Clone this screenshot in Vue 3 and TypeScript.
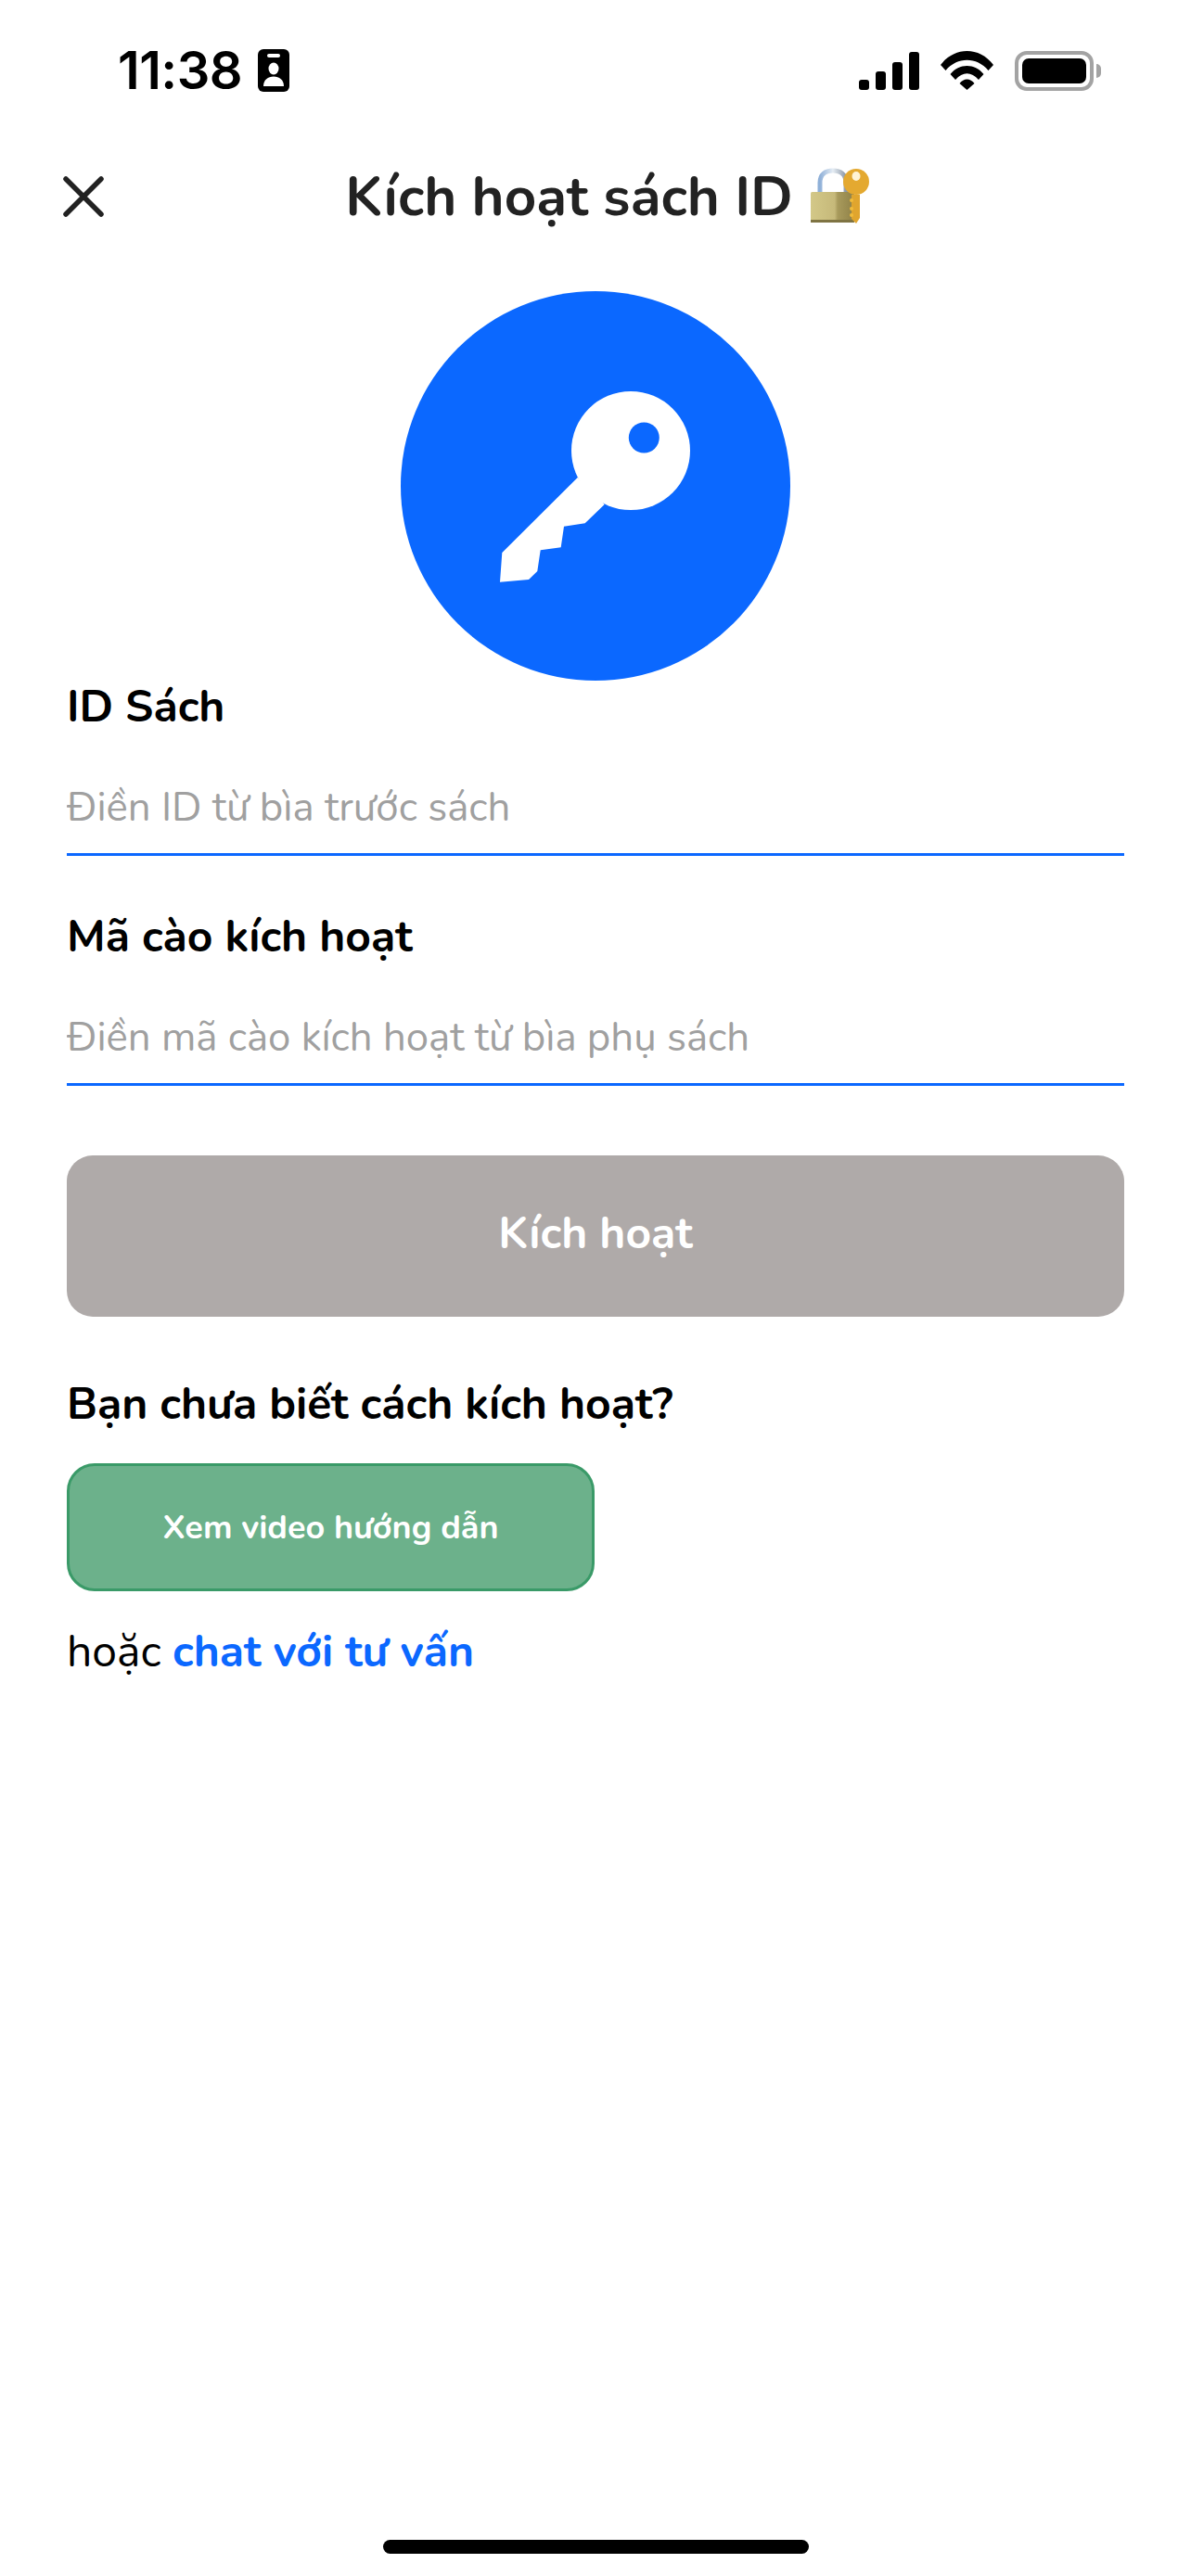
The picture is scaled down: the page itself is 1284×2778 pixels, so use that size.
<script setup lang="ts">
const fields = [
  { label: 'ID Sách', placeholder: 'Điền ID từ bìa trước sách' },
  { label: 'Mã cào kích hoạt', placeholder: 'Điền mã cào kích hoạt từ bìa phụ sách' },
]
</script>

<template>
  <div class="screen">
    <div class="status">
      <div class="status-left">
        <span class="time">11:38</span>
        <svg class="id-icon" width="34" height="46" viewBox="0 0 34 46">
          <rect width="34" height="46" rx="6" fill="#000" />
          <rect x="10" y="5" width="14" height="4" rx="2" fill="#fff" />
          <ellipse cx="17" cy="21" rx="5.500" ry="6.500" fill="#fff" />
          <path d="M6 40c0-7 5-10.500 11-10.500s11 3.500 11 10.500z" fill="#fff" />
        </svg>
      </div>
      <div class="status-right">
        <svg width="65" height="41" viewBox="0 0 65 41">
          <rect x="0" y="30" width="11" height="11" rx="3" />
          <rect x="18" y="21" width="11" height="20" rx="3" />
          <rect x="36" y="11" width="11" height="30" rx="3" />
          <rect x="54" y="0" width="11" height="41" rx="3" />
        </svg>
        <svg width="57" height="42" viewBox="0 0 57 42">
          <path d="M0 15C15-5 42-5 57 15l-5.500 6C39 6 18 6 5.500 21z" />
          <path d="M10.500 25C20 13 37 13 46.500 25l-5.500 6C33 22 24 22 16 31z" />
          <path d="M20.500 35C25 29 32 29 36.500 35L28.500 42z" />
        </svg>
        <div class="battery">
          <div class="battery-body"><div class="battery-fill"></div></div>
          <div class="battery-nub"></div>
        </div>
      </div>
    </div>

    <header class="header">
      <svg class="close" width="46" height="46" viewBox="0 0 46 46">
        <path d="M4 4 42 42M42 4 4 42" stroke="#222" stroke-width="5.500" stroke-linecap="round" fill="none" />
      </svg>
      <h1 class="title">Kích hoạt sách ID</h1>
      <svg class="emoji" width="64" height="62" viewBox="0 0 64 62">
        <defs>
          <linearGradient id="brass" x1="0" x2="1" y1="0" y2="0">
            <stop offset="0" stop-color="#d3c888" />
            <stop offset="0.55" stop-color="#c6b97a" />
            <stop offset="0.62" stop-color="#a89a5c" />
            <stop offset="1" stop-color="#8f8147" />
          </linearGradient>
          <linearGradient id="steel" x1="0" x2="1" y1="0" y2="0">
            <stop offset="0" stop-color="#8fb0d8" />
            <stop offset="0.5" stop-color="#e6edf4" />
            <stop offset="1" stop-color="#8a96a6" />
          </linearGradient>
        </defs>
        <path d="M10 28V16C10 7 16 3 24 3s14 4 14 13v10" fill="none" stroke="url(#steel)" stroke-width="5" />
        <rect x="0" y="26" width="47" height="33" rx="1.500" fill="url(#brass)" />
        <rect x="0" y="56" width="47" height="3" fill="#7f7443" />
        <path d="M44 29h9v25l-4 6-5-5z" fill="#e0a52e" />
        <circle cx="49" cy="15" r="14" fill="#e4a930" />
        <ellipse cx="49" cy="9" rx="4.500" ry="5" fill="#fff4d6" />
        <circle cx="44" cy="35" r="2" fill="#f0bb3a" />
        <circle cx="44" cy="44" r="2" fill="#f0bb3a" />
        <circle cx="44" cy="51" r="2" fill="#f0bb3a" />
      </svg>
    </header>

    <div class="hero">
      <svg width="420" height="420" viewBox="432 314 420 420">
        <circle cx="642" cy="524" r="210" fill="#0b68ff" />
        <circle cx="680" cy="486" r="64" fill="#fff" />
        <polygon
          points="622.700,515 541.300,596 539,627.700 570,625 579.300,616 582.700,593.300 604.700,590.300 608,567.700 630.700,564.300 651.700,544"
          fill="#fff"
        />
        <circle cx="694.300" cy="472" r="16.500" fill="#0b68ff" />
      </svg>
    </div>

    <form class="form" @submit.prevent>
      <label v-for="field in fields" :key="field.label" class="field">
        <span class="field-label">{{ field.label }}</span>
        <input class="field-input" type="text" :placeholder="field.placeholder" />
      </label>

      <button class="submit" type="button">Kích hoạt</button>
    </form>

    <section class="help">
      <h2 class="help-title">Bạn chưa biết cách kích hoạt?</h2>
      <button class="video" type="button">Xem video hướng dẫn</button>
      <p class="chat">hoặc <a class="chat-link">chat với tư vấn</a></p>
    </section>

    <div class="home-indicator"></div>
  </div>
</template>

<style scoped>
.screen {
  position: relative;
  box-sizing: border-box;
  width: 1284px;
  height: 2778px;
  background: #fff;
  font-family: "Nunito", "Open Sans", "Noto Sans", sans-serif;
  color: #000;
  overflow: hidden;
}
.status {
  display: flex;
  justify-content: space-between;
  align-items: center;
  height: 46px;
  padding: 53px 97px 0 127px;
  box-sizing: content-box;
}
.status-left, .status-right { display: flex; align-items: center; }
.status-left { gap: 17px; }
.status-right { gap: 23px; }
.time {
  font-family: Inter, sans-serif;
  font-size: 56px;
  font-weight: 600;
  letter-spacing: -0.500px;
  line-height: 46px;
}
.battery { display: flex; align-items: center; gap: 3px; }
.battery-body {
  box-sizing: border-box;
  width: 85px;
  height: 43px;
  border: 4.500px solid #a3a3a3;
  border-radius: 13px;
  padding: 4px;
}
.battery-fill { width: 100%; height: 100%; background: #000; border-radius: 7px; }
.battery-nub { width: 5px; height: 15px; background: #a3a3a3; border-radius: 0 5px 5px 0; }

.header {
  position: relative;
  display: flex;
  justify-content: center;
  align-items: center;
  gap: 19px;
  height: 70px;
  margin-top: 78px;
  padding-left: 26px;
}
.close { position: absolute; left: 67px; top: 12px; }
.title {
  margin: 0;
  font-size: 60px;
  font-weight: 700;
  color: #222;
  line-height: 70px;
}
.hero { display: flex; justify-content: center; margin-top: 67px; margin-bottom: -2px; }
.hero svg { display: block; }
.form { display: flex; flex-direction: column; margin: 0 72px; }
.field { display: flex; flex-direction: column; }
.field-label {
  font-size: 48px;
  font-weight: 700;
  line-height: 60px;
}
.field-input {
  box-sizing: border-box;
  width: 100%;
  height: 131px;
  padding: 29px 0 0;
  border: 0;
  border-bottom: 3px solid #0b68ff;
  outline: 0;
  background: transparent;
  font: 400 43.700px "Nunito", sans-serif;
}
.field-input::placeholder { color: #a0a0a0; opacity: 1; }
.field + .field { margin-top: 57px; }
.submit {
  height: 174px;
  margin-top: 75px;
  padding-bottom: 7px;
  border: 0;
  border-radius: 28px;
  background: #afaaa9;
  color: #fff;
  font: 700 48px "Nunito", sans-serif;
}
.help { margin: 64px 72px 0; }
.help-title {
  margin: 0;
  font-size: 48px;
  font-weight: 700;
  line-height: 60px;
}
.video {
  display: block;
  box-sizing: border-box;
  width: 569px;
  height: 138px;
  margin-top: 34px;
  border: 3px solid #3a9a68;
  border-radius: 30px;
  background: #6cb18b;
  color: #fff;
  font: 700 36px "Nunito", sans-serif;
}
.chat { margin: 35px 0 0; font-size: 48px; line-height: 60px; }
.chat-link { color: #0b68ff; font-weight: 700; }
.home-indicator {
  position: absolute;
  left: 413px;
  bottom: 24px;
  width: 459px;
  height: 15px;
  background: #000;
  border-radius: 8px;
}
svg { flex: none; }
</style>
